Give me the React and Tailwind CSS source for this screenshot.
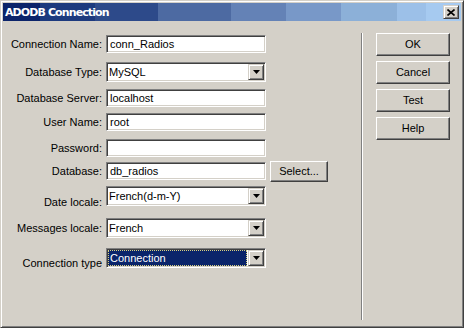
import React from "react";

const sunken =
    "border border-t-[#808080] border-l-[#808080] border-b-white border-r-white shadow-[inset_1px_1px_0_#404040,inset_-1px_-1px_0_#d4d0c8]";
const raised =
    "border border-t-white border-l-white border-r-[#404040] border-b-[#404040] shadow-[inset_-1px_-1px_0_#808080]";
const raisedSmall =
    "border border-t-[#d4d0c8] border-l-[#d4d0c8] border-r-[#404040] border-b-[#404040] shadow-[inset_1px_1px_0_#ffffff,inset_-1px_-1px_0_#808080]";

function TextBox({value}) {
    return (
        <div className={`${sunken} bg-white h-[18px] w-[160px] flex items-center pl-[3px] whitespace-nowrap`}>
            {value}
        </div>
    );
}

function Combo({value, focused}) {
    return (
        <div className={`${sunken} bg-white h-[20px] w-[160px] flex p-[1px]`}>
            <div className="flex-1 flex items-center pr-[1px]">
                {focused ? (
                    <div className="h-full w-full bg-[#0a246a] text-white flex items-center pl-[1px] border border-dotted border-[#d8d080]">
                        {value}
                    </div>
                ) : (
                    <span className="pl-[1px]">{value}</span>
                )}
            </div>
            <div className={`${raisedSmall} bg-[#d4d0c8] w-[16px] h-full flex items-center justify-center`}>
                <svg width="7" height="4" viewBox="0 0 7 4">
                    <polygon points="0,0 7,0 3.5,4" fill="#000"/>
                </svg>
            </div>
        </div>
    );
}

function Row({label, children, mt, h, labelPad = ""}) {
    return (
        <div className={`flex items-center gap-[4px] ${mt} ${h}`}>
            <div className={`w-[99px] text-right whitespace-nowrap ${labelPad}`}>{label}</div>
            {children}
        </div>
    );
}

function Button({children}) {
    return (
        <div className={`${raised} bg-[#d4d0c8] w-[74px] h-[23px] flex items-center justify-center`}>
            {children}
        </div>
    );
}

export default function App() {
    return (
        <div
            className="w-[464px] h-[328px] bg-[#d4d0c8] p-[2px] border border-t-[#d4d0c8] border-l-[#d4d0c8] border-r-[#404040] border-b-[#404040] shadow-[inset_1px_1px_0_#ffffff,inset_-1px_-1px_0_#808080] font-['Liberation_Sans',Arial,sans-serif] text-[11px] leading-[13px] text-black flex flex-col">
            {/* title bar */}
            <div
                className="h-[18px] shrink-0 flex items-center pl-[2px] pr-[2px] bg-[linear-gradient(to_right,#0c246a_0px,#0c246a_37px,#1d3a7e_37px,#1d3a7e_92px,#2d4a8a_92px,#2d4a8a_155px,#4d6aa2_155px,#4d6aa2_228px,#6482b6_228px,#6482b6_283px,#7898c8_283px,#7898c8_338px,#8cb0d8_338px,#8cb0d8_394px,#9cc0e8_394px,#9cc0e8_423px,#a6caf0_423px)]">
                <span className="text-white font-bold text-[11px] tracking-[-0.9px] font-['DejaVu_Sans',sans-serif]">ADODB Connection</span>
                <div className={`${raisedSmall} bg-[#d4d0c8] ml-auto w-[16px] h-[14px] flex items-center justify-center`}>
                    <svg width="8" height="7" viewBox="0 0 8 7">
                        <path d="M0.5 0.5 L7.5 6.5 M7.5 0.5 L0.5 6.5" stroke="#000" strokeWidth="1.6"/>
                    </svg>
                </div>
            </div>

            {/* body */}
            <div className="flex flex-1">
                <div className="w-[358px] flex flex-col">
                    <Row label="Connection Name:" mt="mt-[14px]" h="h-[18px]">
                        <TextBox value="conn_Radios"/>
                    </Row>
                    <Row label="Database Type:" mt="mt-[9px]" h="h-[20px]">
                        <Combo value="MySQL"/>
                    </Row>
                    <Row label="Database Server:" mt="mt-[7px]" h="h-[18px]">
                        <TextBox value="localhost"/>
                    </Row>
                    <Row label="User Name:" mt="mt-[6px]" h="h-[18px]">
                        <TextBox value="root"/>
                    </Row>
                    <Row label="Password:" mt="mt-[8px]" h="h-[18px]">
                        <TextBox value=""/>
                    </Row>
                    <Row label="Database:" mt="mt-[5px]" h="h-[18px]">
                        <TextBox value="db_radios"/>
                        <div className={`${raised} bg-[#d4d0c8] w-[58px] h-[21px] shrink-0 flex items-center justify-center`}>
                            Select...
                        </div>
                    </Row>
                    <Row label="Date locale:" mt="mt-[6px]" h="h-[20px]" labelPad="pt-[12px]">
                        <Combo value="French(d-m-Y)"/>
                    </Row>
                    <Row label="Messages locale:" mt="mt-[12px]" h="h-[20px]">
                        <Combo value="French"/>
                    </Row>
                    <Row label="Connection type" mt="mt-[10px]" h="h-[20px]" labelPad="pt-[10px]">
                        <Combo value="Connection" focused/>
                    </Row>
                </div>

                {/* separator */}
                <div className="w-[2px] mt-[12px] h-[287px] border-l border-l-[#808080] border-r border-r-white"/>

                <div className="ml-[13px] mt-[12px] flex flex-col gap-[5px]">
                    <Button>OK</Button>
                    <Button>Cancel</Button>
                    <Button>Test</Button>
                    <Button>Help</Button>
                </div>
            </div>
        </div>
    );
}
